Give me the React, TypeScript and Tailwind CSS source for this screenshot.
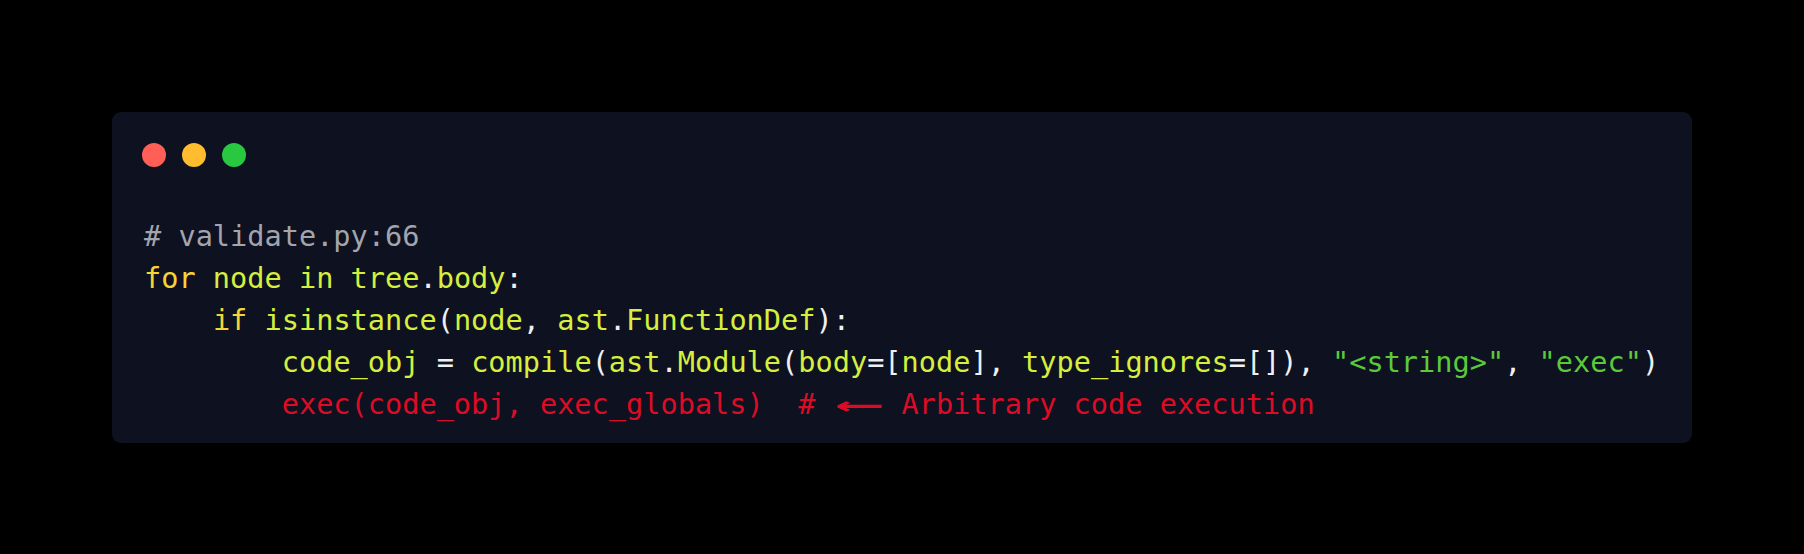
import React from "react";

type Tok = [string, string];

const C = {
  kw: "text-[#f7d435]",
  id: "text-[#d6ef3f]",
  p: "text-[#eef0f2]",
  str: "text-[#5cc93b]",
  cm: "text-[#a3a5ad]",
  red: "text-[#dc0c26]",
};

const lines: Tok[][] = [
  [["# validate.py:66", C.cm]],
  [
    ["for", C.kw],
    [" node in tree", C.id],
    [".", C.p],
    ["body", C.id],
    [":", C.p],
  ],
  [
    ["    ", C.p],
    ["if", C.kw],
    [" isinstance", C.id],
    ["(", C.p],
    ["node", C.id],
    [", ", C.p],
    ["ast", C.id],
    [".", C.p],
    ["FunctionDef", C.id],
    ["):", C.p],
  ],
  [
    ["        ", C.p],
    ["code_obj", C.id],
    [" = ", C.p],
    ["compile", C.id],
    ["(", C.p],
    ["ast", C.id],
    [".", C.p],
    ["Module", C.id],
    ["(", C.p],
    ["body", C.id],
    ["=[", C.p],
    ["node", C.id],
    ["], ", C.p],
    ["type_ignores", C.id],
    ["=[]), ", C.p],
    ['"<string>"', C.str],
    [", ", C.p],
    ['"exec"', C.str],
    [")", C.p],
  ],
];

const App: React.FC = () => {
  return (
    <div className="min-h-screen bg-black flex items-center justify-center">
      <div className="w-[1580px] h-[331px] rounded-[9px] bg-[#0e1120] pt-[31px] pb-[17px] pl-[30px]">
        <div className="flex gap-4">
          <span className="size-6 rounded-full bg-[#ff5f57]" />
          <span className="size-6 rounded-full bg-[#febc2e]" />
          <span className="size-6 rounded-full bg-[#28c840]" />
        </div>
        <pre
          className="mt-[48px] ml-[2px] text-[28.6px] leading-[42px]"
          style={{ fontFamily: '"DejaVu Sans Mono", "Liberation Mono", monospace' }}
        >
          {lines.map((line, i) => (
            <div key={i}>
              {line.map(([t, cls], j) => (
                <span key={j} className={cls}>
                  {t}
                </span>
              ))}
            </div>
          ))}
          <div className={C.red}>
            {"        exec(code_obj, exec_globals)  # "}
            <span className="inline-block w-[3ch] text-center">
              <span className="inline-block scale-x-[2.2] font-bold">⟵</span>
            </span>
            {" Arbitrary code execution"}
          </div>
        </pre>
      </div>
    </div>
  );
};

export default App;
